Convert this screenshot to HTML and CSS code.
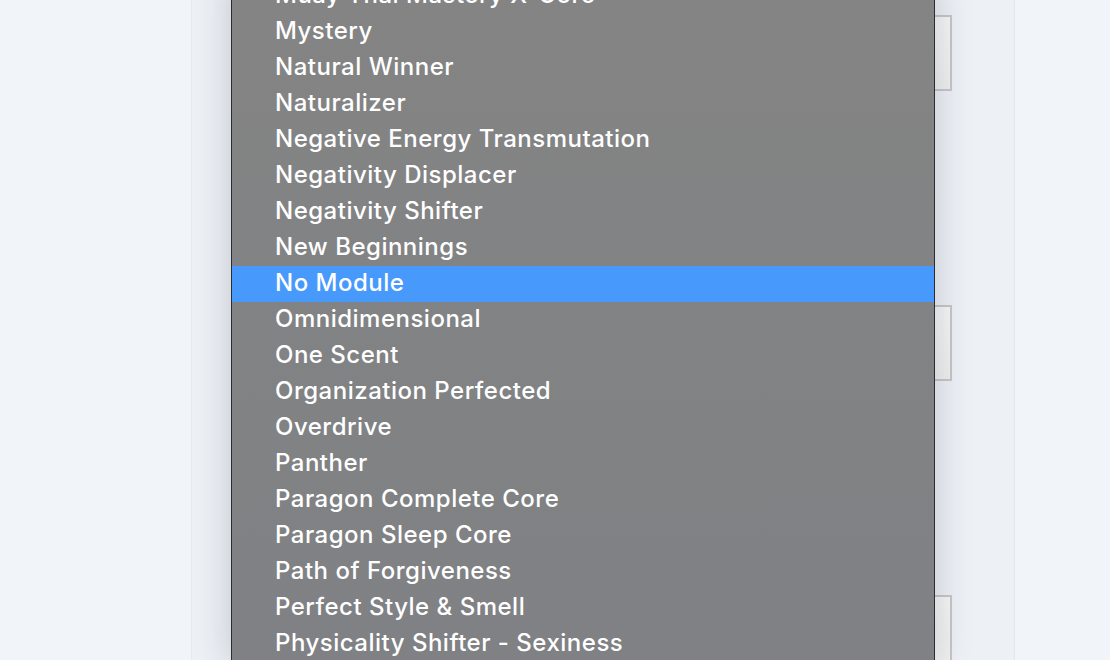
FILE: index.html
```html
<!DOCTYPE html>
<html lang="en">
<head>
    <meta charset="UTF-8">
    <meta name="viewport" content="width=device-width, initial-scale=1.0">
    <title>Module Settings</title>
    <link rel="stylesheet" href="styles.css">
</head>
<body>
    <div class="page">
        <div class="card">
            <div class="field"><div class="box"></div></div>
            <div class="field"><div class="box"></div></div>
            <div class="field"><div class="box"></div></div>
        </div>
        <ul class="menu">
            <li>Muay Thai Mastery X-Core</li>
            <li>Mystery</li>
            <li>Natural Winner</li>
            <li>Naturalizer</li>
            <li>Negative Energy Transmutation</li>
            <li>Negativity Displacer</li>
            <li>Negativity Shifter</li>
            <li>New Beginnings</li>
            <li class="selected">No Module</li>
            <li>Omnidimensional</li>
            <li>One Scent</li>
            <li>Organization Perfected</li>
            <li>Overdrive</li>
            <li>Panther</li>
            <li>Paragon Complete Core</li>
            <li>Paragon Sleep Core</li>
            <li>Path of Forgiveness</li>
            <li>Perfect Style &amp; Smell</li>
            <li>Physicality Shifter - Sexiness</li>
        </ul>
    </div>
</body>
</html>
```

FILE: styles.css
```css
html, body {
    margin: 0;
    padding: 0;
    height: 100%;
    overflow: hidden;
}
body {
    background-color: #f1f4f9;
    font-family: Inter, "Noto Sans", sans-serif;
}
.page {
    position: relative;
    height: 100%;
    overflow: hidden;
    padding-left: 191px;
}
.card {
    width: 824px;
    height: 100%;
    box-sizing: border-box;
    overflow: hidden;
    background-color: #edf0f5;
    border-left: 1px solid #e6e9ee;
    border-right: 1px solid #e3e6eb;
    padding: 15px 62px 0 40px;
}
.field {
    height: 290px;
}
.box {
    height: 76px;
    box-sizing: border-box;
    border: 2px solid #c6c6c8;
    background: linear-gradient(#f6f6f6, #efefef);
}
.menu {
    position: absolute;
    top: -22px;
    bottom: -4px;
    left: 231px;
    width: 704px;
    box-sizing: border-box;
    margin: 0;
    padding: 0;
    list-style: none;
    background: linear-gradient(#848484, #7f8184);
    border-left: 1px solid #2c2c2e;
    border-right: 1px solid #2c2c2e;
    box-shadow: 0 0 34px rgba(40, 50, 70, 0.22);
}
.menu li {
    height: 36px;
    line-height: 34px;
    padding-left: 43px;
    color: #ffffff;
    font-size: 24px;
    font-weight: 500;
    letter-spacing: 0.5px;
    white-space: nowrap;
}
.menu li.selected {
    background-color: #4799fc;
}
```
